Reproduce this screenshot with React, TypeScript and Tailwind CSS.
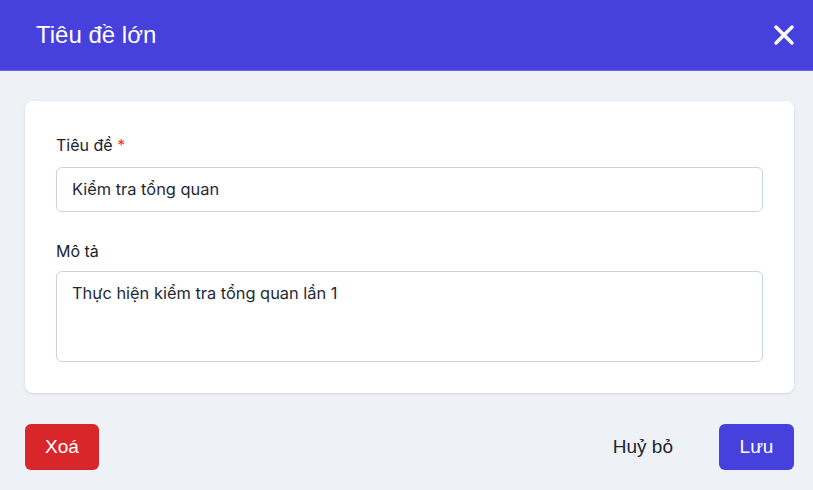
export default function App() {
  return (
    <div className="h-[490px] w-full bg-[#eef1f6] flex flex-col">
      <div className="h-[71px] bg-[#4640dc] border-b border-[#6b66e6] flex items-center justify-between pl-9 pr-[13px]">
        <h1 className="text-white text-[24px] font-['Liberation_Sans',sans-serif]">Tiêu đề lớn</h1>
        <button className="text-white p-1">
          <svg width="24" height="24" viewBox="0 0 24 24" fill="none" stroke="currentColor" strokeWidth="3.4" strokeLinecap="round">
            <path d="M4 4l16 16M20 4L4 20" />
          </svg>
        </button>
      </div>
      <div className="pl-[25px] pr-[19px] pt-[30px]">
        <div className="bg-white rounded-lg shadow-[0_1px_3px_rgba(0,0,0,0.12)] px-[31px] pt-[34px] pb-[31px] font-['Inter',sans-serif]">
          <label className="block text-[16px] leading-[20px] text-[#1c2230]">
            Tiêu đề <span className="text-red-500">*</span>
          </label>
          <div className="mt-[12px] h-[45px] border border-[#c8d3e0] rounded-md flex items-center px-[15px] text-[16.4px] text-[#1f2937]">
            Kiểm tra tổng quan
          </div>
          <label className="block mt-[29px] text-[16px] leading-[20px] text-[#1c2230]">Mô tả</label>
          <div className="mt-[10px] h-[91px] border border-[#c8d3e0] rounded-md px-[15px] pt-[9px] text-[16.4px] leading-[24px] text-[#1f2937]">
            Thực hiện kiểm tra tổng quan lần 1
          </div>
        </div>
      </div>
      <div className="pl-[25px] pr-[19px] mt-[31px] flex items-center justify-between font-['Liberation_Sans',sans-serif] text-[19px]">
        <button className="h-[46px] w-[74px] rounded-md bg-[#d9262a] text-white">Xoá</button>
        <div className="flex items-center gap-[46px]">
          <button className="text-[#1e2433]">Huỷ bỏ</button>
          <button className="h-[46px] w-[75px] rounded-md bg-[#4640dc] text-white">Lưu</button>
        </div>
      </div>
    </div>
  );
}
